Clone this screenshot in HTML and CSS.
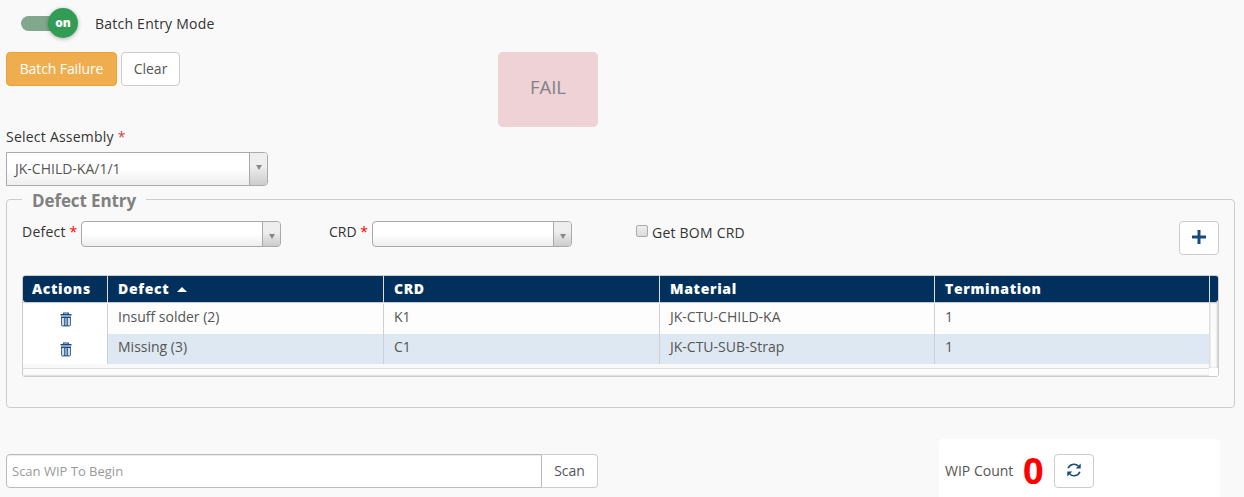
FILE: index.html
```html
<!DOCTYPE html>
<html lang="en">
<head>
<meta charset="utf-8">
<title>Batch Entry</title>
<link rel="stylesheet" href="styles.css">
</head>
<body>
<main class="page">
  <div class="mode">
    <div class="toggle"><span class="knob">on</span></div>
    <span class="label mode-label">Batch Entry Mode</span>
  </div>
  <div class="top">
    <button class="btn btn-warning">Batch Failure</button>
    <button class="btn btn-clear">Clear</button>
    <div class="fail">FAIL</div>
  </div>
  <div class="label assembly-label">Select Assembly <span class="req soft">*</span></div>
  <div class="select select-lg"><span class="value">JK-CHILD-KA/1/1</span><span class="arrow"></span></div>

  <section class="group">
    <h2 class="legend">Defect Entry</h2>
    <div class="fields">
      <span class="label defect-label">Defect <span class="req">*</span></span>
      <div class="select"><span class="value"></span><span class="arrow"></span></div>
      <span class="label crd-label">CRD <span class="req">*</span></span>
      <div class="select"><span class="value"></span><span class="arrow"></span></div>
      <span class="check"></span>
      <span class="label bom-label">Get BOM CRD</span>
      <button class="btn btn-icon add">
        <svg width="14" height="14" viewBox="0 0 14 14"><path d="M5.500 0h3v5.500H14v3H8.500V14h-3V8.500H0v-3h5.500z" fill="#184a80"/></svg>
      </button>
    </div>
    <div class="grid">
      <div class="row head">
        <div class="cell">Actions</div>
        <div class="cell">Defect <span class="sort"></span></div>
        <div class="cell">CRD</div>
        <div class="cell">Material</div>
        <div class="cell">Termination</div>
        <div class="corner"></div>
      </div>
      <div class="body">
        <div class="rows">
          <div class="row">
            <div class="cell action"><svg width="12" height="15" viewBox="0 0 12 15"><path d="M3.700 2.500V1h4.600v1.500" fill="none" stroke="#184a80" stroke-width="1.200"/><path d="M.500 2h11v1.600H.500zM1 4.500h10v1.600H1z" fill="#184a80"/><path d="M1.700 5.500v7.700q0 .700.700.700h7.200q.700 0 .700-.700V5.500M4.300 6v8M6 6v8M7.700 6v8" fill="none" stroke="#184a80"/></svg></div>
            <div class="cell">Insuff solder (2)</div><div class="cell">K1</div><div class="cell">JK-CTU-CHILD-KA</div><div class="cell">1</div>
          </div>
          <div class="row alt">
            <div class="cell action"><svg width="12" height="15" viewBox="0 0 12 15"><path d="M3.700 2.500V1h4.600v1.500" fill="none" stroke="#184a80" stroke-width="1.200"/><path d="M.500 2h11v1.600H.500zM1 4.500h10v1.600H1z" fill="#184a80"/><path d="M1.700 5.500v7.700q0 .700.700.700h7.200q.700 0 .700-.700V5.500M4.300 6v8M6 6v8M7.700 6v8" fill="none" stroke="#184a80"/></svg></div>
            <div class="cell">Missing (3)</div><div class="cell">C1</div><div class="cell">JK-CTU-SUB-Strap</div><div class="cell">1</div>
          </div>
        </div>
        <div class="vscroll"></div>
      </div>
      <div class="hbar"><div class="hscroll"></div><div class="hcorner"></div></div>
    </div>
  </section>

  <div class="bottom">
    <input class="scan-input" type="text" placeholder="Scan WIP To Begin">
    <button class="btn scan-btn">Scan</button>
    <div class="wip">
      <span class="wip-label">WIP Count</span>
      <span class="count">0</span>
      <button class="btn btn-icon">
        <svg width="14" height="14" viewBox="0 0 14 14"><path d="M1.200 5.300A6 5.600 0 0 1 11.300 3M12.800 8.700A6 5.600 0 0 1 2.700 11" fill="none" stroke="#184a80" stroke-width="1.600"/><path d="M13.700.500v5H8.700zM.300 13.500v-5h5z" fill="#184a80"/></svg>
      </button>
    </div>
  </div>
</main>
</body>
</html>
```
FILE: styles.css
```css
* { box-sizing: border-box; }
body { margin: 0; background: #f9f9f9; font: 14px/20px "Open Sans", sans-serif; color: #555; overflow: hidden; }
.page { height: 497px; padding: 8px 9px 0 6px; display: flex; flex-direction: column; }
.label { color: #333; font-weight: 500; letter-spacing: .23px; white-space: nowrap; }
.req { color: #f00; }
.req.soft { color: #d43f3a; }
.mode { display: flex; align-items: center; height: 30px; padding-left: 15px; }
.toggle { width: 57px; height: 15px; display: flex; align-items: center; justify-content: flex-end; background: linear-gradient(#81a88d, #81a88d) left / 49px 100% no-repeat; border-radius: 8px; }
.knob { width: 30px; height: 30px; flex: none; border-radius: 50%; background: #339c54; color: #fff; font-weight: 800; font-size: 12px; line-height: 29px; text-align: center; box-shadow: 0 1px 4px rgba(0,0,0,.3); }
.mode-label { margin-left: 17px; padding-top: 2px; }
.top { display: flex; height: 75px; margin-top: 14px; align-items: flex-start; }
.btn { height: 34px; padding: 0; font: 14px/20px "Open Sans", sans-serif; color: #555; background: #fff; border: 1px solid #ccc; border-radius: 4px; display: flex; align-items: center; justify-content: center; }
.btn-warning { width: 111px; color: #fff; background: #f0ad4e; border-color: #eea236; font-weight: 500; letter-spacing: -.1px; }
.btn-clear { width: 59px; margin-left: 4px; }
.fail { width: 100px; height: 75px; margin-left: 318px; border-radius: 5px; background: #eed2d5; color: #808086; font-size: 18.5px; line-height: 70px; text-align: center; }
.assembly-label { height: 25px; }
.select { width: 200px; height: 26px; display: flex; border: 1px solid #aaa; border-radius: 4px; background: linear-gradient(#fff 50%, #eee); overflow: hidden; flex: none; }
.value { flex: 1; }
.arrow { width: 18px; border-left: 1px solid #aaa; background: linear-gradient(#eee 40%, #ccc); display: flex; justify-content: center; align-items: center; padding-top: 4px; }
.arrow::before { content: ""; border: solid transparent; border-width: 5px 3px 0; border-top-color: #888; }
.select-lg { width: 262px; height: 34px; border-radius: 0 4px 4px 0; }
.select-lg .value { padding-left: 8px; line-height: 31px; }
.select-lg .arrow { padding: 0 0 3px; }
.group { height: 209px; margin-top: 13px; border: 1px solid #ccc; border-radius: 4px; padding: 0 15px; flex: none; }
.legend { width: 124px; height: 22px; margin: -11px 0 0; padding-left: 10px; font-size: 17px; line-height: 23px; font-weight: 700; letter-spacing: -.1px; color: #808080; background: #f9f9f9; }
.fields { display: flex; height: 34px; margin-top: 10px; }
.defect-label { width: 59px; padding-top: 1px; }
.crd-label { width: 43px; margin-left: 48px; padding-top: 1px; letter-spacing: 0; }
.check { width: 12px; height: 12px; margin: 4px 4px 0 64px; border: 1px solid #aaa; border-radius: 2px; background: linear-gradient(#eee, #dcdcdc); }
.bom-label { padding-top: 2px; }
.btn-icon { width: 40px; }
.add { margin-left: auto; padding-bottom: 2px; }
.grid { height: 102px; margin-top: 20px; border: 1px solid #ccc; border-radius: 3px; overflow: hidden; }
.row { display: grid; grid-template-columns: 84px 276px 276px 275px 275px; height: 30px; }
.head { grid-template-columns: 84px 276px 276px 275px 275px 1fr; height: 26px; background: #00305b; color: #fff; font-weight: 800; letter-spacing: .65px; border-radius: 0 0 3px 3px; }
.head .cell { line-height: 26px; white-space: nowrap; }
.head .cell + .cell, .corner { border-left: 1px solid #ddd; }
.cell { padding-left: 10px; line-height: 26px; }
.head .cell:first-child { padding-left: 9px; }
.sort { display: inline-block; border: solid transparent; border-width: 0 5px 5px; border-bottom-color: #fff; vertical-align: 2px; margin-left: 3px; }
.body { height: 66px; border-top: 1px solid #ccc; display: flex; }
.rows { width: 1186px; padding-top: 1px; }
.rows .row { background: #fdfdfd; }
.rows .row.alt { background: #dee8f2; }
.rows .cell + .cell { border-left: 1px solid #d0d0d0; }
.rows .action { background: #fff; padding: 0 0 0 2px; display: flex; align-items: center; justify-content: center; }
.vscroll { flex: 1; background: #fbfbfb; border-left: 1px solid #ddd; box-shadow: inset -1px 0 2px #ccc, inset 1px 0 1px #eee; }
.hbar { height: 8px; display: flex; background: #fff; }
.hscroll { width: 1186px; border-top: 1px solid #ddd; background: #fbfbfb; box-shadow: inset 0 -1px 1px #ddd; }
.hcorner { flex: 1; background: #fff; }
.bottom { display: flex; margin-top: 31px; height: 58px; flex: none; align-items: flex-start; }
.scan-input { width: 536px; height: 34px; margin: 15px 0 0; padding: 0 5px 1px; border: 1px solid #bbb; border-radius: 4px 0 0 4px; font: 13px "Open Sans", sans-serif; background: #fff; box-shadow: inset 0 1px 1px rgba(0,0,0,.08); }
.scan-input::placeholder { color: #999; opacity: 1; }
.scan-btn { width: 56px; margin-top: 15px; border-left: 0; border-radius: 0 4px 4px 0; }
.wip { width: 281px; height: 58px; margin-left: 341px; background: #fff; border-radius: 4px 4px 0 0; display: flex; align-items: center; padding: 6px 0 0 6px; }
.wip-label { width: 78px; white-space: nowrap; }
.count { width: 31px; color: #f00; font-size: 36px; font-weight: 700; line-height: 40px; }
.wip .btn { padding-bottom: 2px; }
```
